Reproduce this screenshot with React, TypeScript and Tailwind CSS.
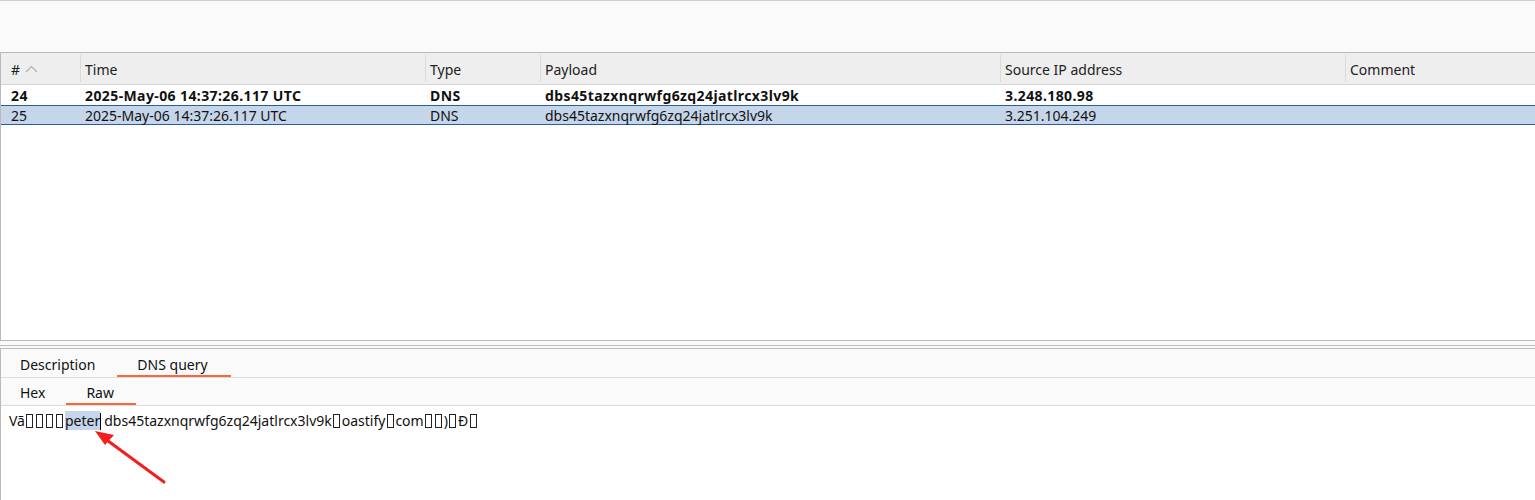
import React from "react";

const cols = [
  { label: "#", w: 79 },
  { label: "Time", w: 345 },
  { label: "Type", w: 115 },
  { label: "Payload", w: 460 },
  { label: "Source IP address", w: 345 },
  { label: "Comment", w: 190 },
];

const Box = () => (
  <span className="inline-block w-[7px] h-[14px] border border-[#222] align-[-2px] mx-[1.5px]" />
);

function Row({ cells, bold, selected }: { cells: string[]; bold?: boolean; selected?: boolean }) {
  return (
    <div
      className={
        "flex h-[20px] items-center " +
        (selected ? "bg-[#c5d5ea] border-y border-[#2c5e96]" : "bg-white") +
        (bold ? " font-bold tracking-[0.4px]" : "")
      }
    >
      {cells.map((c, i) => (
        <div
          key={i}
          style={{ width: cols[i].w }}
          className={"shrink-0 pr-1 whitespace-nowrap text-[#111] " + (i === 0 ? "pl-[10px]" : "pl-[5px]")}
        >
          {c}
        </div>
      ))}
    </div>
  );
}

export default function App() {
  return (
    <div
      className="w-[1535px] h-[500px] overflow-hidden bg-[#fafafa] text-[14px] text-[#111] flex flex-col relative"
      style={{ fontFamily: '"Noto Sans", "Open Sans", sans-serif' }}
    >
      <div className="h-[52px] border-t border-[#cfcfcf] shrink-0" />
      {/* table */}
      <div className="h-[289px] shrink-0 bg-white border-t border-l border-b border-[#b9b9b9] flex flex-col">
        <div className="flex h-[32px] bg-[#eeeeee] border-b border-[#d6d6d6] shrink-0">
          {cols.map((c, i) => (
            <div
              key={i}
              style={{ width: cols[i].w }}
              className={
                "shrink-0 flex items-center whitespace-nowrap text-[#222] pt-[1px] " +
                (i > 0 ? "border-l border-[#dadada] my-[2px] pl-[4px]" : "pl-[10px]")
              }
            >
              {c.label}
              {i === 0 && (
                <svg width="13" height="8" viewBox="0 0 13 8" className="ml-[5px]">
                  <path d="M1 7 L6.5 1.5 L12 7" fill="none" stroke="#b0b0b0" strokeWidth="1.2" />
                </svg>
              )}
            </div>
          ))}
        </div>
        <Row bold cells={["24", "2025-May-06 14:37:26.117 UTC", "DNS", "dbs45tazxnqrwfg6zq24jatlrcx3lv9k", "3.248.180.98", ""]} />
        <Row selected cells={["25", "2025-May-06 14:37:26.117 UTC", "DNS", "dbs45tazxnqrwfg6zq24jatlrcx3lv9k", "3.251.104.249", ""]} />
      </div>
      {/* splitter */}
      <div className="h-[8px] shrink-0 border-b border-[#bdbdbd] flex flex-col justify-center">
        <div className="h-px bg-[#bdbdbd] mt-[2px]" />
      </div>
      {/* bottom pane */}
      <div className="flex-1 flex flex-col border-l border-[#b9b9b9]">
        <div className="h-[29px] flex items-stretch border-b border-[#dcdcdc] shrink-0 pt-[2px]">
          <div className="flex items-center pl-[19px] pr-[22px]">Description</div>
          <div className="flex items-center pl-[20px] pr-[23px] relative">
            DNS query
            <div className="absolute left-0 right-0 bottom-[0px] h-[2px] bg-[#f26a3d]" />
          </div>
        </div>
        <div className="h-[28px] flex items-stretch border-b border-[#dcdcdc] shrink-0 pt-[2px]">
          <div className="flex items-center pl-[19px] pr-[21px]">Hex</div>
          <div className="flex items-center pl-[20px] pr-[22px] relative">
            Raw
            <div className="absolute left-0 right-0 bottom-[0px] h-[2px] bg-[#f26a3d]" />
          </div>
        </div>
        <div className="flex-1 bg-white pl-[8px] pt-[4px] whitespace-nowrap relative">
          <span>Vã</span>
          <Box />
          <Box />
          <Box />
          <Box />
          <span className="bg-[#c5d5ea]">peter</span>
          <span className="inline-block w-[1px] h-[17px] bg-black align-[-4px]" />
          <span className="ml-[3px]">dbs45tazxnqrwfg6zq24jatlrcx3lv9k</span>
          <Box />
          <span>oastify</span>
          <Box />
          <span>com</span>
          <Box />
          <Box />
          <span>)</span>
          <Box />
          <span>Ð</span>
          <Box />
          <svg className="absolute left-0 top-0 pointer-events-none" width="200" height="100" viewBox="0 0 200 100">
            <line x1="163" y1="76" x2="103" y2="32" stroke="#f31f1f" strokeWidth="3" strokeLinecap="round" />
            <polygon points="94,25 113,29 104,39" fill="#f31f1f" />
          </svg>
        </div>
      </div>
    </div>
  );
}
